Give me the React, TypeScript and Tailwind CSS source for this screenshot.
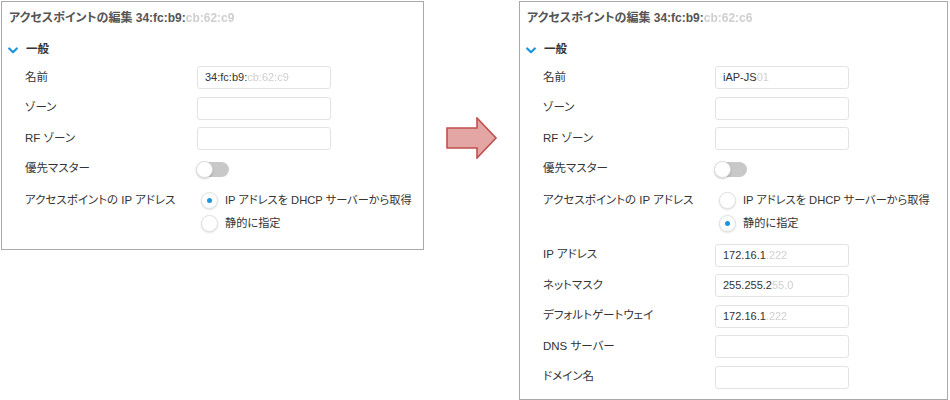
import React from "react";

const font = {
  fontFamily: '"Liberation Sans", Arial, "Noto Sans CJK JP", sans-serif',
  fontFeatureSettings: '"palt"',
};

function Blur({ children }: { children: React.ReactNode }) {
  return <span className="text-[#cfcfcf] blur-[0.6px]">{children}</span>;
}

function Input({ children }: { children?: React.ReactNode }) {
  return (
    <div className="w-[134px] h-[23px] border border-[#e3e3e3] rounded-[3px] bg-white flex items-center pl-[7px] text-[11px] text-[#333] whitespace-nowrap">
      {children}
    </div>
  );
}

function Label({ children }: { children: React.ReactNode }) {
  return (
    <div className="w-[172px] shrink-0 pl-[23px] box-content h-[23px] flex items-center text-[11.5px] text-[#333] whitespace-nowrap">
      {children}
    </div>
  );
}

function Row({ label, children }: { label: string; children?: React.ReactNode }) {
  return (
    <div className="flex items-center h-[23px]">
      <Label>{label}</Label>
      {children}
    </div>
  );
}

function Toggle() {
  return (
    <div className="relative w-[32px] h-[15px] rounded-full bg-[#c8c8c8]">
      <div className="absolute left-[-1px] top-[-1px] w-[17px] h-[17px] rounded-full bg-white border border-[#dcdcdc] shadow-[0_1px_2px_rgba(0,0,0,0.2)]" />
    </div>
  );
}

function Radio({ on, label }: { on: boolean; label: string }) {
  return (
    <div className="flex items-center h-[23px]">
      <div className="w-[17px] h-[17px] rounded-full border border-[#e0e0e0] bg-white shadow-[0_1px_2px_rgba(0,0,0,0.12)] flex items-center justify-center ml-[4px]">
        {on && <div className="w-[5px] h-[5px] rounded-full bg-[#1b95e0]" />}
      </div>
      <span className="ml-[7px] text-[11.2px] text-[#333] whitespace-nowrap">{label}</span>
    </div>
  );
}

function Chevron() {
  return (
    <svg width="10" height="7" viewBox="0 0 10 7">
      <path d="M1.2 1.5 L5 5.2 L8.8 1.5" fill="none" stroke="#1b95e0" strokeWidth="2.2" strokeLinecap="round" strokeLinejoin="round" />
    </svg>
  );
}

function Panel({ right }: { right: boolean }) {
  return (
    <div
      className={
        "border border-[#a9a9a9] bg-white flex flex-col " +
        (right ? "w-[429px] h-[399px]" : "w-[423px] h-[249px]")
      }
    >
      <div className="h-[31px] flex items-center pl-[7px] pt-[1px] text-[12px] font-bold text-[#555] whitespace-nowrap">
        アクセスポイントの編集 34:fc:b9:<Blur>{right ? "cb:62:c6" : "cb:62:c9"}</Blur>
      </div>
      <div className="h-[20px] mt-[7px] flex items-center pl-[6px]">
        <Chevron />
        <span className="ml-[8px] text-[11.5px] font-bold text-[#333]">一般</span>
      </div>
      <div className="flex flex-col gap-[7.5px] mt-[6px]">
        <Row label="名前">
          <Input>
            {right ? (
              <>
                iAP-JS<Blur>01</Blur>
              </>
            ) : (
              <>
                34:fc:b9:<Blur>cb:62:c9</Blur>
              </>
            )}
          </Input>
        </Row>
        <Row label="ゾーン">
          <Input />
        </Row>
        <Row label="RF ゾーン">
          <Input />
        </Row>
        <Row label="優先マスター">
          <Toggle />
        </Row>
        <div className="flex my-[1px]">
          <Label>アクセスポイントの IP アドレス</Label>
          <div className="flex flex-col">
            <Radio on={!right} label="IP アドレスを DHCP サーバーから取得" />
            <Radio on={right} label="静的に指定" />
          </div>
        </div>
        {right && (
          <>
            <Row label="IP アドレス">
              <Input>
                172.16.1<Blur>.222</Blur>
              </Input>
            </Row>
            <Row label="ネットマスク">
              <Input>
                255.255.2<Blur>55.0</Blur>
              </Input>
            </Row>
            <Row label="デフォルトゲートウェイ">
              <Input>
                172.16.1<Blur>.222</Blur>
              </Input>
            </Row>
            <Row label="DNS サーバー">
              <Input />
            </Row>
            <Row label="ドメイン名">
              <Input />
            </Row>
          </>
        )}
      </div>
    </div>
  );
}

function Arrow() {
  return (
    <svg width="52" height="42" viewBox="0 0 52 42">
      <path
        d="M1 11 L31 11 L31 1 L50 21 L31 41 L31 31 L1 31 Z"
        fill="#e3a6a5"
        stroke="#c0504d"
        strokeWidth="1.6"
        strokeLinejoin="miter"
      />
    </svg>
  );
}

export default function App() {
  return (
    <div className="w-[950px] h-[400px] bg-white pt-[1px] pl-[1px] flex items-start" style={font}>
      <Panel right={false} />
      <div className="w-[95px] pt-[116px] pl-[22px]">
        <Arrow />
      </div>
      <Panel right={true} />
    </div>
  );
}
